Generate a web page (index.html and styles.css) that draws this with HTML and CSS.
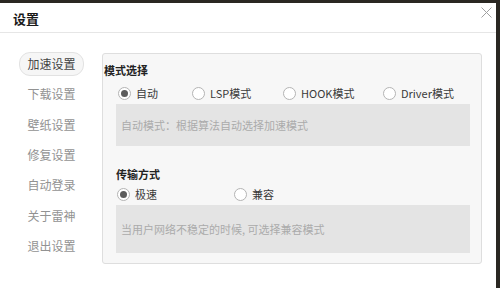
FILE: index.html
```html
<!DOCTYPE html>
<html lang="zh">
<head>
  <meta charset="UTF-8" />
  <title>设置</title>
  <link rel="stylesheet" href="styles.css">
</head>
<body>
  <div class="window">
    <header class="titlebar">
      <h1>设置</h1>
      <button class="close" aria-label="关闭">
        <svg width="11" height="11" viewBox="0 0 11 11"><path d="M0.5 0.5L10.5 10.5M10.5 0.5L0.5 10.5" stroke="#a0a0a0" stroke-width="1" fill="none"/></svg>
      </button>
    </header>

    <div class="body">
      <nav class="sidebar">
        <a class="nav-item active"><span>加速设置</span></a>
        <a class="nav-item"><span>下载设置</span></a>
        <a class="nav-item"><span>壁纸设置</span></a>
        <a class="nav-item"><span>修复设置</span></a>
        <a class="nav-item"><span>自动登录</span></a>
        <a class="nav-item"><span>关于雷神</span></a>
        <a class="nav-item"><span>退出设置</span></a>
      </nav>

      <section class="panel">
        <h2 class="group-title first">模式选择</h2>
        <div class="radios mode">
          <label class="radio checked"><i></i>自动</label>
          <label class="radio"><i></i>LSP模式</label>
          <label class="radio"><i></i>HOOK模式</label>
          <label class="radio"><i></i>Driver模式</label>
        </div>
        <div class="hint small">自动模式：根据算法自动选择加速模式</div>

        <h2 class="group-title">传输方式</h2>
        <div class="radios transfer">
          <label class="radio checked"><i></i>极速</label>
          <label class="radio"><i></i>兼容</label>
        </div>
        <div class="hint tall">当用户网络不稳定的时候, 可选择兼容模式</div>
      </section>
    </div>
  </div>
</body>
</html>
```

FILE: styles.css
```css
* {
  box-sizing: border-box;
}

html, body {
  margin: 0;
  height: 100%;
}

body {
  background: #2a2722;
  font-family: "Noto Sans CJK SC", "Noto Sans", sans-serif;
  overflow: hidden;
}

.window {
  margin: 3px 4px 0 0;
  height: 285px;
  background: #fff;
  display: flex;
  flex-direction: column;
}

.titlebar {
  height: 30px;
  border-bottom: 1px solid #e6e6e6;
  display: flex;
  align-items: center;
  justify-content: space-between;
  padding: 0 4px 0 13px;
}

.titlebar h1 {
  margin: 0;
  font-size: 13px;
  font-weight: 700;
  color: #1a1a1a;
  line-height: 16px;
  margin-top: 3px;
}

.close {
  background: none;
  border: none;
  padding: 0;
  width: 11px;
  height: 11px;
  align-self: flex-start;
  margin-top: 4px;
}

.close svg {
  display: block;
}

.body {
  flex: 1;
  display: flex;
}

.sidebar {
  width: 102px;
  padding-top: 16px;
  display: flex;
  flex-direction: column;
}

.nav-item {
  height: 30.3px;
  display: flex;
  align-items: center;
  justify-content: center;
  font-size: 12px;
  color: #929292;
  padding-left: 1px;
}

.nav-item span {
  display: inline-block;
  line-height: 20px;
  padding: 1px 7px;
  border: 1px solid transparent;
  border-radius: 11px;
}

.nav-item.active span {
  background: #f6f6f6;
  border-color: #e2e2e2;
  color: #444;
}

.panel {
  margin-top: 20px;
  margin-right: 14px;
  width: 380px;
  height: 211px;
  background: #f7f7f7;
  border: 1px solid #dedede;
  border-radius: 3px;
  padding: 8px 11px 0 13px;
}

.group-title {
  margin: 0;
  font-size: 11px;
  line-height: 16px;
  font-weight: 700;
  color: #222;
}

.group-title.first {
  margin-left: -12px;
}

.group-title:not(.first) {
  margin-top: 20px;
}

.radios {
  display: grid;
  margin-top: 7px;
  height: 16px;
  padding-left: 2px;
}

.radios.mode {
  grid-template-columns: 74px 91px 100px auto;
}

.radios.transfer {
  grid-template-columns: 117px auto;
  margin-top: 4px;
  padding-left: 1px;
}

.radio {
  display: flex;
  align-items: center;
  font-size: 11px;
  line-height: 16px;
  color: #3a3a3a;
  white-space: nowrap;
}

.radio i {
  width: 13px;
  height: 13px;
  border-radius: 50%;
  border: 1px solid #b4b4b4;
  background: #fff;
  margin-right: 5px;
  position: relative;
}

.radio.checked i::after {
  content: "";
  position: absolute;
  left: 2px;
  top: 2px;
  width: 7px;
  height: 7px;
  border-radius: 50%;
  background: #5c5c5c;
}

.hint {
  margin-top: 3px;
  background: #e4e4e4;
  padding-left: 5px;
  font-size: 11px;
  color: #ababab;
  display: flex;
  align-items: center;
}

.hint.small {
  height: 42px;
}

.hint.tall {
  height: 48px;
}
```
